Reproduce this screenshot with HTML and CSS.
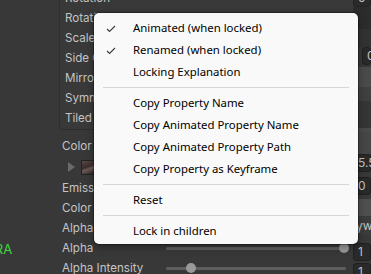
FILE: index.html
```html
<!DOCTYPE html>
<html lang="en">
<head>
    <meta charset="UTF-8">
    <meta name="viewport" content="width=device-width, initial-scale=1.0">
    <title>Material property context menu</title>
    <link rel="stylesheet" href="styles.css">
</head>
<body>

<div class="inspector">
    <div class="main">
        <div class="group">
            <div class="row first"><span class="label">Rotation</span></div>
            <div class="row"><span class="label">Rotation Speed</span></div>
            <div class="row"><span class="label">Scale</span></div>
            <div class="row"><span class="label">Side Count</span></div>
            <div class="row"><span class="label">Mirror</span></div>
            <div class="row"><span class="label">Symmetry</span></div>
            <div class="row"><span class="label">Tiled</span></div>
        </div>

        <div class="row plain"><span class="label">Color</span></div>
        <div class="row plain tex">
            <span class="arrow"></span>
            <span class="thumb"></span>
        </div>
        <div class="row plain"><span class="label">Emission</span></div>
        <div class="row plain"><span class="label">Color</span></div>
        <div class="row plain"><span class="label">Alpha</span></div>
        <div class="row plain">
            <span class="tag">CAMERA</span>
            <span class="label short">Alpha</span>
            <span class="slider"><span class="knob" style="left: 173px"></span></span>
        </div>
        <div class="row plain">
            <span class="label short">Alpha Intensity</span>
            <span class="slider"><span class="knob" style="left: 20px"></span></span>
        </div>
    </div>

    <div class="strip">
        <div class="field top">0</div>
        <div class="band b1"></div>
        <div class="band b2"></div>
        <div class="field inset">0</div>
        <div class="band b3"></div>
        <div class="band b4"></div>
        <div class="band b5"></div>
        <div class="band b6"></div>
        <div class="band b7"></div>
        <div class="field">5.5</div>
        <div class="field gap">0</div>
        <div class="band b8"></div>
        <div class="band b9">yw</div>
        <div class="field num">1</div>
        <div class="field num2">1</div>
    </div>
</div>

<div class="menu">
    <div class="item checked">
        <svg class="check" width="10" height="8" viewBox="0 0 10 8"><polyline points="1,4 3.5,6.5 9,1" fill="none" stroke="#3a3a3a" stroke-width="1.1"/></svg>
        Animated (when locked)
    </div>
    <div class="item checked">
        <svg class="check" width="10" height="8" viewBox="0 0 10 8"><polyline points="1,4 3.5,6.5 9,1" fill="none" stroke="#3a3a3a" stroke-width="1.1"/></svg>
        Renamed (when locked)
    </div>
    <div class="item">Locking Explanation</div>
    <div class="sep"></div>
    <div class="item">Copy Property Name</div>
    <div class="item">Copy Animated Property Name</div>
    <div class="item">Copy Animated Property Path</div>
    <div class="item">Copy Property as Keyframe</div>
    <div class="sep"></div>
    <div class="item">Reset</div>
    <div class="sep"></div>
    <div class="item">Lock in children</div>
</div>

</body>
</html>
```

FILE: styles.css
```css
body {
    margin: 0;
    width: 371px;
    height: 274px;
    overflow: hidden;
    background-color: #383838;
    font-family: Inter, "Noto Sans", sans-serif;
    font-size: 11.6px;
    color: #c4c4c4;
}
.inspector {
    display: grid;
    grid-template-columns: 353px 18px;
    height: 274px;
    overflow: hidden;
}
.main {
    padding-left: 59px;
}
.group {
    margin-top: -12px;
    border: 1px solid #2f2f2f;
    border-top: none;
    border-right: none;
    border-bottom-left-radius: 4px;
    background-color: #393939;
    padding-bottom: 1px;
    margin-bottom: 6px;
}
.row {
    height: 20px;
    display: flex;
    align-items: center;
    position: relative;
}
.label {
    padding-left: 5px;
    white-space: nowrap;
}
.plain .label {
    padding-left: 3px;
}
.label.short {
    width: 104px;
}
.tex {
    height: 22px;
    padding-left: 9px;
    gap: 6px;
}
.arrow {
    width: 0;
    height: 0;
    border-left: 7px solid #6a6a6a;
    border-top: 5px solid transparent;
    border-bottom: 5px solid transparent;
}
.thumb {
    width: 12px;
    height: 13px;
    border: 1px solid #222;
    background: linear-gradient(160deg, #5a4a48 0%, #3a2c2c 45%, #6d5b58 60%, #2a2222 100%);
}
.tag {
    position: absolute;
    left: -102px;
    top: 3px;
    color: #3fd63f;
    font-size: 13px;
}
.slider {
    position: relative;
    width: 180px;
    height: 3px;
    background-color: #5e5e5e;
    border-radius: 2px;
}
.knob {
    position: absolute;
    top: -4px;
    width: 10px;
    height: 10px;
    border-radius: 50%;
    background-color: #999;
}
.strip {
    display: flex;
    flex-direction: column;
    font-size: 12px;
}
.field {
    height: 16px;
    line-height: 16px;
    padding-left: 4px;
    background-color: #2a2a2a;
    border: 1px solid #212121;
    border-radius: 3px;
    flex-shrink: 0;
}
.field.top {
    margin-top: -11px;
}
.band {
    flex-shrink: 0;
}
.b1 { height: 22px; background-color: #2c2c2c; }
.b2 { height: 18px; background-color: #323232; }
.field.inset {
    margin-left: 9px;
}
.b3 { height: 20px; margin-top: 2px; background-color: #4a4a4a; }
.b4 { height: 14px; background-color: #404040; }
.b5 { height: 27px; background-color: #363636; }
.b6 { height: 4px; background-color: #4a4a4a; }
.b7 { height: 22px; background-color: #464646; }
.field.gap {
    margin-top: 5px;
}
.b8 { height: 17px; margin-top: 4px; background-color: #4f4f4f; }
.b9 {
    height: 19px;
    line-height: 19px;
    padding-left: 3px;
    background-color: #3c3c3c;
}
.field.num {
    margin-top: 8px;
}
.field.num2 {
    margin-top: 2px;
}
.menu {
    position: absolute;
    left: 94px;
    top: 13px;
    width: 264px;
    height: 231px;
    box-sizing: border-box;
    padding: 4px 0;
    background-color: #f9f9f9;
    border-radius: 5px;
    box-shadow: 0 0 0 1px rgba(0, 0, 0, 0.3), 0 3px 8px rgba(0, 0, 0, 0.35);
    font-family: "Noto Sans", sans-serif;
    font-size: 11.4px;
    color: #000;
}
.item {
    position: relative;
    height: 22px;
    line-height: 22px;
    padding-left: 39px;
    white-space: nowrap;
}
.check {
    position: absolute;
    left: 12px;
    top: 8px;
}
.sep {
    height: 1px;
    margin: 4px 9px 4px 9px;
    background-color: #d6d6d6;
}
```
